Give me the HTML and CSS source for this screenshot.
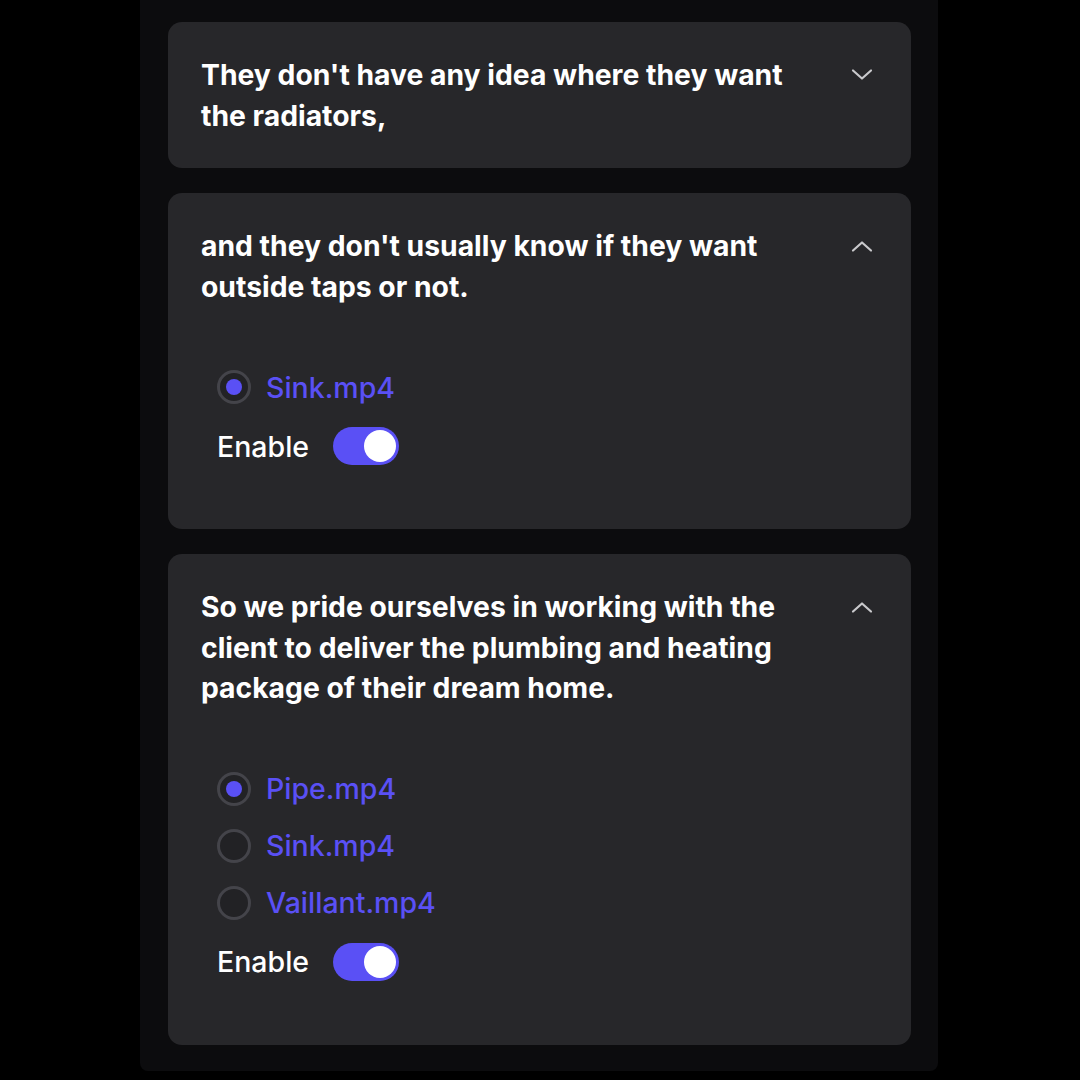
FILE: index.html
```html
<!DOCTYPE html>
<html lang="en">
<head>
<meta charset="utf-8">
<link rel="stylesheet" href="styles.css">
</head>
<body>
<div class="panel">
  <div class="card">
    <div class="head">
      <div class="title">They don't have any idea where they want the radiators,</div>
      <svg class="chev" viewBox="0 0 24 24"><path d="M3 7.5 L12 15.5 L21 7.5"/></svg>
    </div>
  </div>

  <div class="card">
    <div class="head">
      <div class="title">and they don't usually know if they want outside taps or not.</div>
      <svg class="chev" viewBox="0 0 24 24"><path d="M3 16.5 L12 8.5 L21 16.5"/></svg>
    </div>
    <div class="body">
      <label class="opt"><span class="radio checked"></span><span class="name">Sink.mp4</span></label>
      <div class="enable"><span>Enable</span><span class="toggle"><span class="knob"></span></span></div>
    </div>
  </div>

  <div class="card">
    <div class="head">
      <div class="title">So we pride ourselves in working with the client to deliver the plumbing and heating package of their dream home.</div>
      <svg class="chev" viewBox="0 0 24 24"><path d="M3 16.5 L12 8.5 L21 16.5"/></svg>
    </div>
    <div class="body">
      <label class="opt"><span class="radio checked"></span><span class="name">Pipe.mp4</span></label>
      <label class="opt"><span class="radio"></span><span class="name">Sink.mp4</span></label>
      <label class="opt"><span class="radio"></span><span class="name">Vaillant.mp4</span></label>
      <div class="enable"><span>Enable</span><span class="toggle"><span class="knob"></span></span></div>
    </div>
  </div>
</div>
</body>
</html>
```

FILE: styles.css
```css
html, body {
  margin: 0;
  padding: 0;
  background: #000;
  height: 1080px;
  overflow: hidden;
  font-family: Inter, "Liberation Sans", sans-serif;
}
.panel {
  width: 798px;
  margin-left: 140px;
  box-sizing: border-box;
  background: #0c0c0e;
  border-radius: 0 0 8px 8px;
  padding: 22px 27px 26px 28px;
  display: flex;
  flex-direction: column;
  gap: 25px;
}
.card {
  background: #27272a;
  border-radius: 14px;
  padding: 33px 37px 32px 33px;
}
.head {
  display: flex;
  align-items: flex-start;
  gap: 45px;
}
.title {
  flex: 1;
  color: #fff;
  font-weight: 700;
  font-size: 28.3px;
  line-height: 40.5px;
}
.chev {
  width: 24px;
  height: 24px;
  margin-top: 8px;
  flex: none;
  fill: none;
  stroke: #c9c9cc;
  stroke-width: 2.2;
  stroke-linecap: round;
  stroke-linejoin: round;
}
.body {
  margin-top: 60px;
  padding: 0 0 29px 16px;
  display: flex;
  flex-direction: column;
  gap: 17px;
}
.opt {
  height: 40px;
  display: flex;
  align-items: center;
  gap: 15px;
}
.radio {
  width: 34px;
  height: 34px;
  box-sizing: border-box;
  border: 3px solid #44444a;
  border-radius: 50%;
  background: #222225;
  display: flex;
  align-items: center;
  justify-content: center;
}
.radio.checked::after {
  content: "";
  width: 16px;
  height: 16px;
  border-radius: 50%;
  background: #5a50f5;
}
.name {
  color: #5a50f5;
  font-size: 28.5px;
  font-weight: 500;
}
.enable {
  height: 44px;
  display: flex;
  align-items: center;
  gap: 24px;
  color: #fff;
  font-size: 28.5px;
  font-weight: 500;
}
.toggle {
  width: 66px;
  height: 38px;
  box-sizing: border-box;
  padding: 3px;
  border-radius: 19px;
  background: #5a50f5;
  display: flex;
  justify-content: flex-end;
}
.knob {
  width: 32px;
  height: 32px;
  border-radius: 50%;
  background: #fff;
}
```
